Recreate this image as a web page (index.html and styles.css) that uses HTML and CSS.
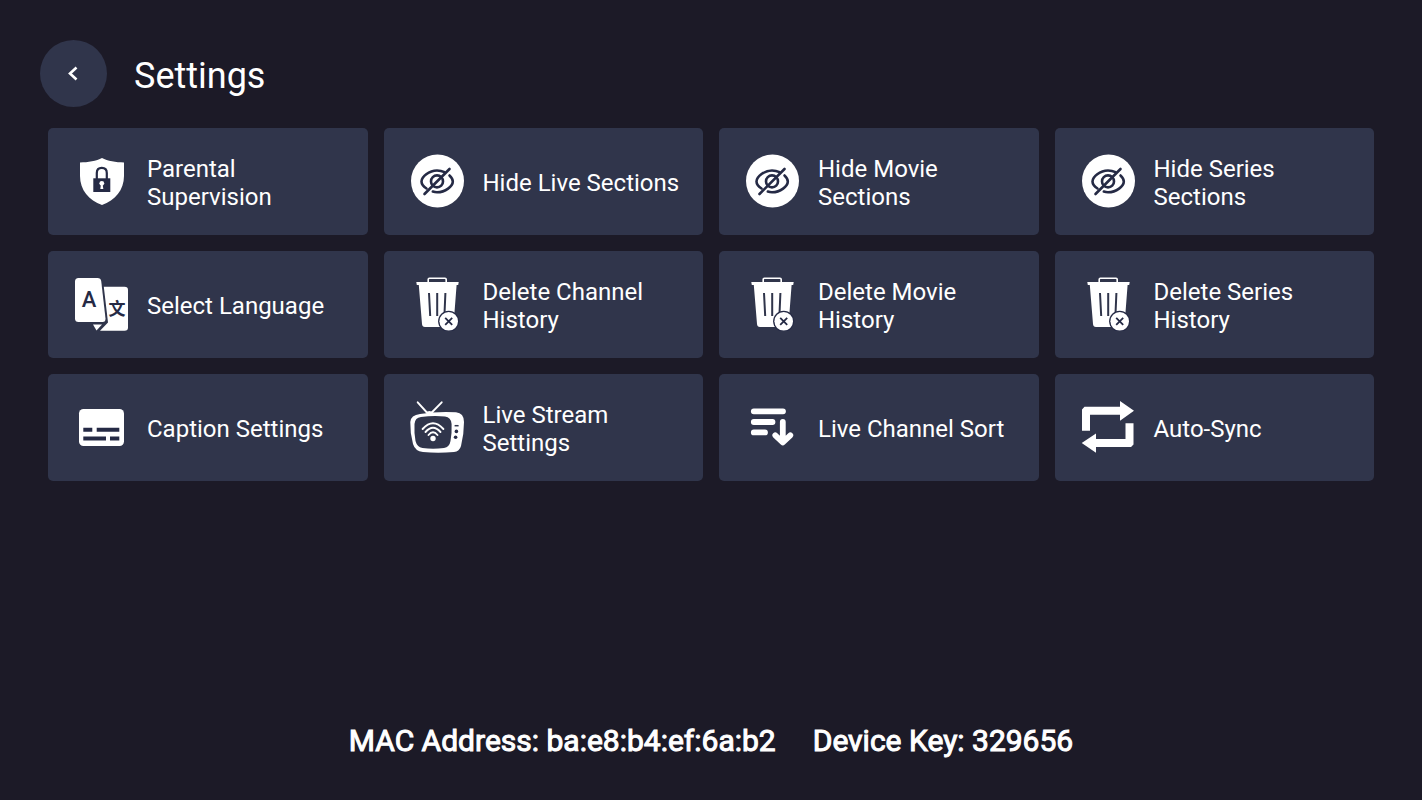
FILE: index.html
```html
<!DOCTYPE html>
<html lang="en">
<head>
    <meta charset="UTF-8">
    <meta name="viewport" content="width=device-width, initial-scale=1.0">
    <title>Settings</title>
    <link rel="stylesheet" href="styles.css">
</head>
<body>
    <!-- Shared icons -->
    <svg class="icon-defs" aria-hidden="true">
        <symbol id="icon-hide" viewBox="0 0 54 54">
            <circle cx="27.500" cy="27" r="26.500" fill="#fff"/>
            <g fill="none" stroke="#252a45" stroke-width="2.6" stroke-linecap="round">
                <path d="M16.5 34.5C13.500 32.500 11.500 29.500 11.500 27.500C11.500 23 19 16.500 27 16.500C30 16.500 32.500 17.200 34.500 18.200"/>
                <path d="M39.500 21.500C41.500 23.300 42.800 25.500 42.800 27.500C42.800 32 35.500 38.300 27 38.300C25.500 38.300 24 38 22.800 37.600"/>
                <circle cx="27" cy="27.400" r="6"/>
                <path d="M14.500 40L39.500 15"/>
            </g>
        </symbol>
        <symbol id="icon-trash" viewBox="0 0 54 54">
            <path d="M18.200 5.500V2.500Q18.200 1.300 19.400 1.300H35Q36.200 1.300 36.200 2.500V5.500" fill="none" stroke="#fff" stroke-width="1.600"/>
            <path d="M6.300 5H48.700L48.200 8H46.600L43.600 47Q43.400 50 40.500 50H15Q12.200 50 12 47L8.800 8H6.800Z" fill="#fff"/>
            <path d="M19 16L20.200 39M27.200 16V39M35.400 16L34.400 39" fill="none" stroke="#30354b" stroke-width="2"/>
            <circle cx="38.700" cy="44.300" r="10.600" fill="#252a45"/>
            <circle cx="38.700" cy="44.300" r="9.300" fill="#fff"/>
            <path d="M35.200 40.800L42.200 47.800M42.200 40.800L35.200 47.800" stroke="#252a45" stroke-width="1.800"/>
        </symbol>
    </svg>

    <div class="page">
        <header class="header">
            <button class="back-btn" type="button" aria-label="Back">
                <svg class="back-icon" viewBox="0 0 16 16" aria-hidden="true">
                    <path d="M10.500 1.500L4 7.500L10.500 13.500" fill="none" stroke="#fff" stroke-width="2.600"/>
                </svg>
            </button>
            <h1 class="title">Settings</h1>
        </header>

        <main class="settings-grid">
            <button class="card" type="button">
                <svg class="icon" viewBox="0 0 54 54" aria-hidden="true">
                    <path d="M28 4C33.500 7 42 8.300 50 8.500V22C50 36 41 46.500 28 51C15 46.500 6 36 6 22V8.500C14 8.300 22.500 7 28 4Z" fill="#fff"/>
                    <path d="M22.800 25V19Q22.800 13.800 27.800 13.800Q32.800 13.800 32.800 19V25" fill="none" stroke="#252a45" stroke-width="2.200"/>
                    <rect x="19.300" y="24.300" width="17" height="13.700" fill="#252a45"/>
                    <circle cx="27.800" cy="29.300" r="2.400" fill="#fff"/>
                    <path d="M27.100 29H28.500L29.300 35H26.300Z" fill="#fff"/>
                </svg>
                <span class="card-text">Parental Supervision</span>
            </button>

            <button class="card" type="button">
                <svg class="icon" aria-hidden="true"><use href="#icon-hide"/></svg>
                <span class="card-text">Hide Live Sections</span>
            </button>

            <button class="card" type="button">
                <svg class="icon" aria-hidden="true"><use href="#icon-hide"/></svg>
                <span class="card-text">Hide Movie Sections</span>
            </button>

            <button class="card" type="button">
                <svg class="icon" aria-hidden="true"><use href="#icon-hide"/></svg>
                <span class="card-text">Hide Series Sections</span>
            </button>

            <button class="card" type="button">
                <svg class="icon" viewBox="0 0 54 54" aria-hidden="true">
                    <path d="M4.500 1H23.500Q26.800 1 27.200 4L31.500 41.500Q31.700 45 28.500 45H4.500Q1 45 1 41.500V4.500Q1 1 4.500 1Z" fill="#fff"/>
                    <path d="M19 47.500H28L22.500 53.500Z" fill="#fff"/>
                    <path d="M29.800 9.700H50.500Q54 9.700 54 13V50.500Q54 53.800 50.500 53.800H26L34 45.500Z" fill="#fff"/>
                    <text class="icon-letter" x="15" y="29.500" text-anchor="middle">A</text>
                    <text class="icon-hanzi" x="43" y="38" text-anchor="middle">文</text>
                </svg>
                <span class="card-text">Select Language</span>
            </button>

            <button class="card" type="button">
                <svg class="icon" aria-hidden="true"><use href="#icon-trash"/></svg>
                <span class="card-text">Delete Channel History</span>
            </button>

            <button class="card" type="button">
                <svg class="icon" aria-hidden="true"><use href="#icon-trash"/></svg>
                <span class="card-text">Delete Movie History</span>
            </button>

            <button class="card" type="button">
                <svg class="icon" aria-hidden="true"><use href="#icon-trash"/></svg>
                <span class="card-text">Delete Series History</span>
            </button>

            <button class="card" type="button">
                <svg class="icon" viewBox="0 0 54 54" aria-hidden="true">
                    <rect x="5" y="9" width="45" height="37" rx="4.500" fill="#fff"/>
                    <path d="M9.300 27.700H18.300V31.700H9.300ZM22.700 27.700H45.300V31.700H22.700ZM9.300 36.500H32V40.500H9.300ZM36 36.500H45.300V40.500H36Z" fill="#252a45"/>
                </svg>
                <span class="card-text">Caption Settings</span>
            </button>

            <button class="card" type="button">
                <svg class="icon" viewBox="0 0 54 54" aria-hidden="true">
                    <path d="M7.700 2.300L17.800 13.500M31.700 2.300L20.800 13.500" stroke="#fff" stroke-width="1.900" stroke-linecap="round"/>
                    <path d="M15.500 13Q19.300 9 23.500 13Z" fill="#fff"/>
                    <path d="M10 14Q26 11.200 46 12.200Q54 13 54 22Q54 34 51 46Q49.500 51.500 44 52Q28 53.500 13 52Q5 51 3 44Q0 33 0.300 22Q0.800 15 10 14Z" fill="#fff"/>
                    <path d="M11 17Q23 15.500 35 16.500Q41 17 41.600 24Q42 33 40.500 41Q39.500 47 34 48Q23 49.300 12.500 48Q7 47 5.500 41Q4 33 4.500 24Q5 17.700 11 17Z" fill="#30354b"/>
                    <g fill="none" stroke="#fff" stroke-width="1.900" stroke-linecap="round">
                        <path d="M12.600 29Q23 17.500 33.400 29"/>
                        <path d="M15.500 32Q23 23.500 30.500 32"/>
                        <path d="M18.500 35Q23 29.600 27.500 35"/>
                    </g>
                    <circle cx="23" cy="38.500" r="2.700" fill="#fff"/>
                    <path d="M44.600 25.700H48.600" stroke="#30354b" stroke-width="1.500"/>
                    <circle cx="46.400" cy="31.400" r="1.800" fill="#252a45"/>
                    <circle cx="45.600" cy="37.200" r="1.800" fill="#252a45"/>
                </svg>
                <span class="card-text">Live Stream Settings</span>
            </button>

            <button class="card" type="button">
                <svg class="icon" viewBox="0 0 54 54" aria-hidden="true">
                    <path d="M8.800 11.300H38M8.800 22H27.500M8.800 32.400H20M37.800 22V42M30.300 35.300L37.800 42.500L45.300 35.300" fill="none" stroke="#fff" stroke-width="5.800" stroke-linecap="round" stroke-linejoin="round"/>
                </svg>
                <span class="card-text">Live Channel Sort</span>
            </button>

            <button class="card" type="button">
                <svg class="icon" viewBox="0 0 54 54" aria-hidden="true">
                    <path d="M1 30.700V9.500L3.500 6.700H39V1L53 10.800L39 20.700V14.700H9V30.700Z" fill="#fff"/>
                    <path d="M52.500 23.300V44.500L50 47H15V52.700L0.700 43L15 33.500V39H44.500V23.300Z" fill="#fff"/>
                </svg>
                <span class="card-text">Auto-Sync</span>
            </button>
        </main>

        <footer class="device-info">
            <span>MAC Address: ba:e8:b4:ef:6a:b2</span>
            <span>Device Key: 329656</span>
        </footer>
    </div>
</body>
</html>
```
FILE: styles.css
```css
* {
    box-sizing: border-box;
}

body {
    margin: 0;
    background-color: #1c1a27;
    color: #fff;
    font-family: Roboto, "Noto Sans CJK SC", sans-serif;
}

.icon-defs {
    display: none;
}

.page {
    display: flex;
    flex-direction: column;
    min-height: 100vh;
    padding: 40px 48px;
}

/* Header */
.header {
    display: flex;
    align-items: center;
    gap: 27px;
    margin: 0 0 21px -8px;
}

.back-btn {
    display: flex;
    align-items: center;
    justify-content: center;
    width: 67px;
    height: 67px;
    padding: 0;
    border: none;
    border-radius: 50%;
    background-color: #30354b;
    cursor: pointer;
}

.back-icon {
    width: 16px;
    height: 16px;
}

.title {
    margin: 0;
    padding-top: 4px;
    font-size: 36px;
    font-weight: 400;
    line-height: 42px;
}

/* Settings cards */
.settings-grid {
    display: grid;
    grid-template-columns: repeat(4, 1fr);
    grid-auto-rows: minmax(107px, auto);
    gap: 16px;
}

.card {
    display: flex;
    align-items: center;
    gap: 19px;
    padding: 0 20px 1px 26px;
    border: none;
    border-radius: 5px;
    background-color: #30354b;
    color: #fff;
    font-family: inherit;
    font-size: 24px;
    line-height: 28px;
    text-align: left;
    cursor: pointer;
}

.card:hover,
.back-btn:hover {
    background-color: #3d4360;
}

.icon {
    flex: none;
    width: 54px;
    height: 54px;
}

.icon-letter {
    fill: #252a45;
    font-size: 22px;
    font-weight: 500;
}

.icon-hanzi {
    fill: #252a45;
    font-family: "Noto Sans CJK SC", sans-serif;
    font-size: 17px;
    font-weight: 700;
}

.card-text {
    padding-top: 4px;
}

/* Device info */
.device-info {
    display: flex;
    justify-content: center;
    gap: 37px;
    margin-top: auto;
    font-size: 30px;
    font-weight: 400;
    line-height: 38px;
    -webkit-text-stroke: 1px #fff;
}
```
